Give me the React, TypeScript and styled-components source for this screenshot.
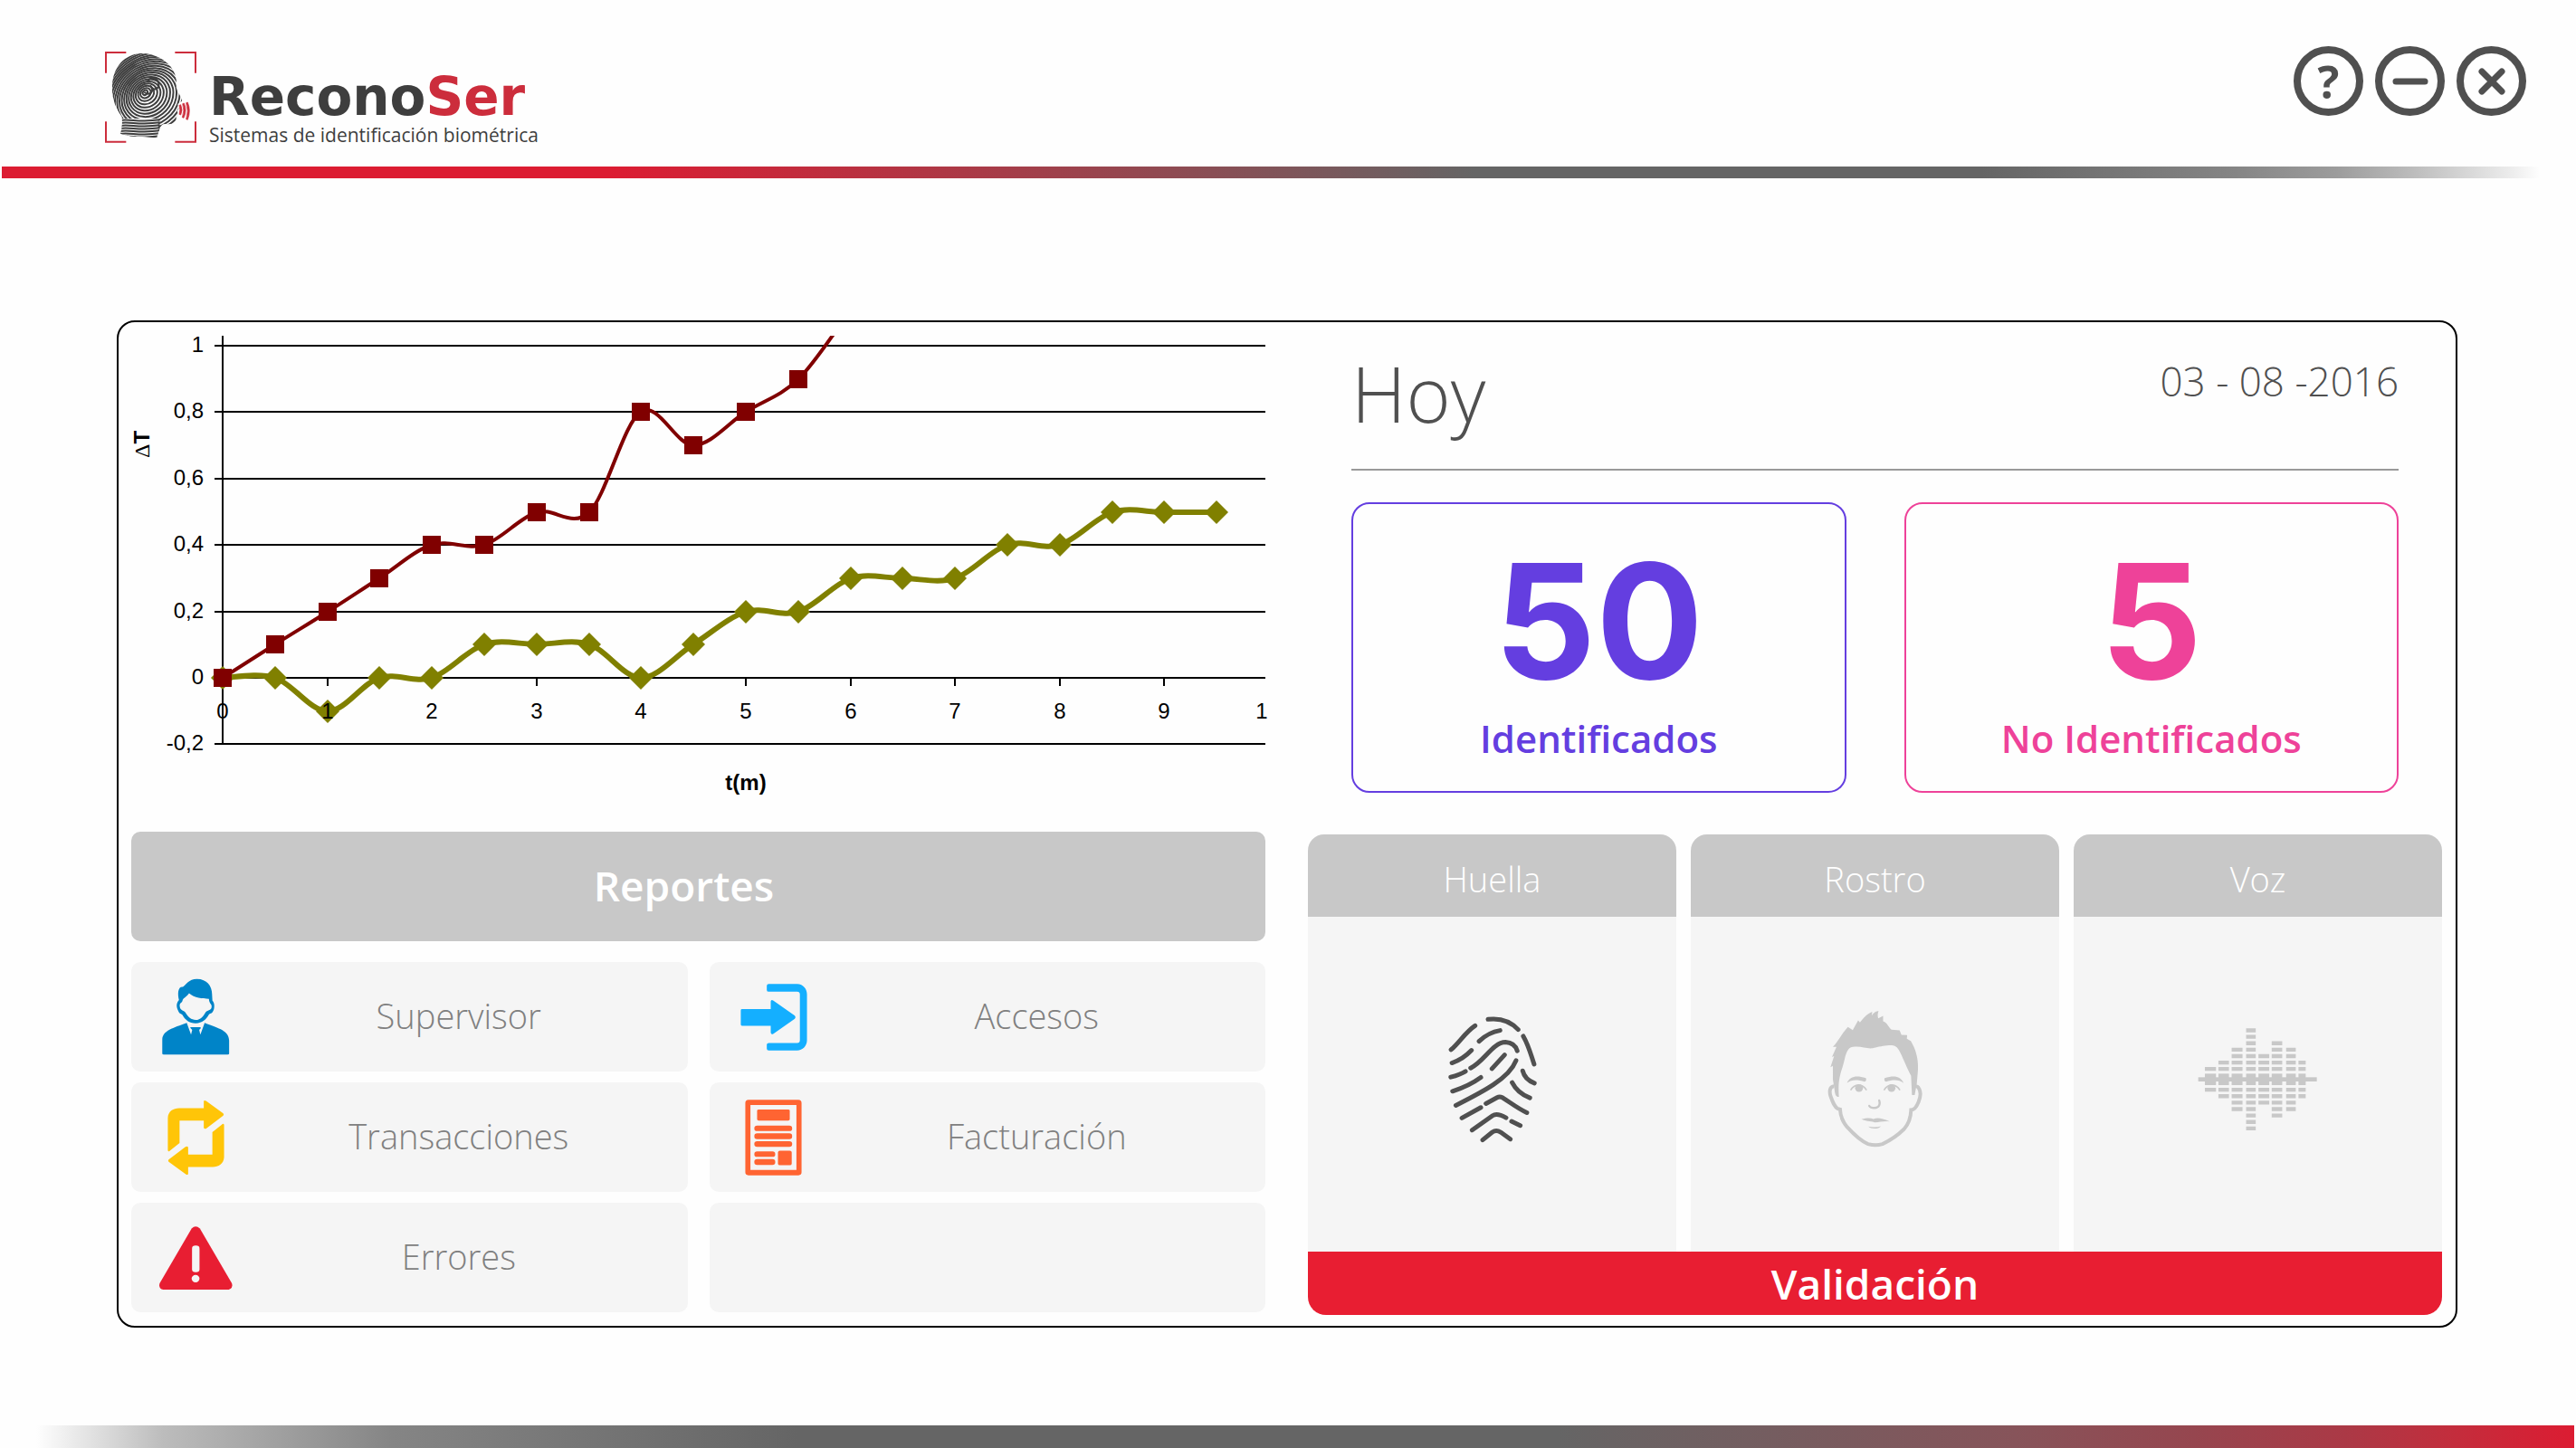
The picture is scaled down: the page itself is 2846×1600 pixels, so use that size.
import React, { useId } from "react";
import styled, { createGlobalStyle } from "styled-components";

const GlobalStyle = createGlobalStyle`
  * { box-sizing: border-box; }
  body { margin: 0; background: #fefefe; font-family: "Open Sans", "Noto Sans", sans-serif; }
  button { border: 0; padding: 0; margin: 0; background: none; color: inherit; font: inherit; cursor: pointer; }
  h1, h2, p { margin: 0; font: inherit; }
  svg { display: block; flex: none; }
`;

const INK = "#505050";
const RED = "#e81e32";
const LOGO_RED = "#cc2d3c";
const SILVER = "#c8c8c8";
const MIST = "#f5f5f5";

const Page = styled.div`
  display: flex;
  flex-direction: column;
  min-height: 100vh;
`;

const Header = styled.header`
  display: flex;
  justify-content: space-between;
  align-items: flex-start;
  height: 184px;
  padding: 51px 55px 0 116px;
`;

const TopRule = styled.div`
  height: 13px;
  margin: 0 40px 0 2px;
  background: linear-gradient(
    90deg,
    #dc1c32 0%,
    #dc1c32 24%,
    #96464f 44%,
    #656565 58%,
    #656565 78%,
    #858585 88%,
    #9c9c9c 92%,
    #bcbcbc 95%,
    #eeeeee 99%,
    #fefefe 100%
  );
`;

const BottomRule = styled.div`
  height: 25px;
  margin: 0 2px 0 40px;
  background: linear-gradient(
    270deg,
    #dc1c32 0%,
    #c22e3d 5%,
    #ab3946 9%,
    #96464f 15%,
    #87545a 22%,
    #656565 40%,
    #656565 70%,
    #858585 86%,
    #bcbcbc 95%,
    #fefefe 100%
  );
`;

const Logo = styled.div`
  display: flex;
  align-items: flex-start;
  gap: 14px;
  padding-top: 6px;
`;

const LogoText = styled.div`
  padding-top: 22px;
`;

const Brand = styled.h1`
  font: bold 58px/56px "DejaVu Sans", sans-serif;
  color: #3e3e3e;
`;

const BrandAccent = styled.span`
  color: ${LOGO_RED};
`;

const Tagline = styled.p`
  font-size: 21px;
  line-height: 28px;
  color: #3e3e3e;
`;

const Controls = styled.div`
  display: flex;
  gap: 13px;
`;

const RoundButton = styled.button`
  display: flex;
  align-items: center;
  justify-content: center;
  width: 77px;
  height: 77px;
  border: 8px solid ${INK};
  border-radius: 50%;
  color: ${INK};
  font-size: 50px;
  line-height: 50px;
  font-weight: 700;
`;

const Main = styled.main`
  flex: 1;
  padding: 157px 131px 40px 129px;
`;

const Panel = styled.div`
  display: grid;
  grid-template-columns: 1fr 1fr;
  column-gap: 47px;
  align-items: start;
  padding: 13px 15px 12px 14px;
  border: 2px solid #000;
  border-radius: 20px;
`;

const Chart = styled.svg`
  width: 100%;
  height: auto;
  overflow: visible;
`;

const Column = styled.section`
  min-width: 0;
`;

const ReportsTitle = styled.h2`
  display: flex;
  align-items: center;
  justify-content: center;
  height: 121px;
  padding: 0 32px 4px 0;
  border-radius: 10px;
  background: ${SILVER};
  color: #fff;
  font-size: 46px;
  font-weight: 600;
`;

const Tiles = styled.div`
  display: grid;
  grid-template-columns: 1fr 1fr;
  gap: 12px 24px;
  margin-top: 23px;
`;

const Tile = styled.button`
  display: flex;
  align-items: center;
  height: 121px;
  padding-left: 33px;
  border-radius: 10px;
  background: ${MIST};
  color: #808080;
`;

const EmptyTile = styled.div`
  border-radius: 10px;
  background: ${MIST};
`;

const TileIcon = styled.span`
  display: flex;
  justify-content: center;
  width: 76px;
`;

const TileLabel = styled.span`
  flex: 1;
  padding-bottom: 4px;
  text-align: center;
  font-size: 38px;
  line-height: 48px;
  font-weight: 300;
`;

const Today = styled.div`
  padding: 0 48px;
`;

const TodayHeader = styled.div`
  display: flex;
  justify-content: space-between;
  align-items: flex-start;
  height: 151px;
  padding-top: 22px;
  border-bottom: 2px solid #999;
  color: ${INK};
  font-weight: 300;
`;

const TodayTitle = styled.h2`
  font-size: 84px;
  line-height: 88px;
`;

const TodayDate = styled.time`
  padding-top: 6px;
  font-size: 44px;
  line-height: 48px;
`;

const Stats = styled.div`
  display: grid;
  grid-template-columns: 1fr 1fr;
  gap: 64px;
  margin-top: 35px;
`;

const StatCard = styled.div<{ $tone: string }>`
  display: flex;
  flex-direction: column;
  align-items: center;
  height: 321px;
  padding-top: 41px;
  border: 2px solid ${(p) => p.$tone};
  border-radius: 20px;
  color: ${(p) => p.$tone};
`;

const StatValue = styled.strong`
  font: 700 176px/176px Inter, sans-serif;
`;

const StatLabel = styled.span`
  margin-top: 18px;
  font-size: 42px;
  line-height: 48px;
  font-weight: 600;
`;

const Methods = styled.div`
  display: grid;
  grid-template-columns: repeat(3, 1fr);
  gap: 16px;
  margin-top: 46px;
`;

const Method = styled.button`
  display: flex;
  flex-direction: column;
  overflow: hidden;
  border-radius: 18px 18px 0 0;
  background: ${MIST};
`;

const MethodName = styled.span`
  width: 100%;
  height: 91px;
  padding-top: 25px;
  background: ${SILVER};
  color: #fff;
  text-align: center;
  font-size: 38px;
  line-height: 48px;
  font-weight: 300;
`;

const MethodArt = styled.span`
  display: flex;
  align-items: center;
  justify-content: center;
  width: 100%;
  height: 370px;
  padding-bottom: 12px;
`;

const Validate = styled.button`
  display: block;
  width: 100%;
  height: 70px;
  border-radius: 0 0 20px 20px;
  background: ${RED};
  color: #fff;
  font-size: 46px;
  line-height: 68px;
  font-weight: 600;
`;

/* ---------- logo ---------- */

const HEAD =
  "M117 6 C160 4 205 26 226 62 C238 85 238 105 236 118 C240 134 250 146 256 161 C252 170 243 170 241 175 L244 188 L239 197 L243 207 L236 217 C238 236 225 243 200 240 C182 239 180 262 172 284 C148 287 120 279 100 282 C82 280 66 276 51 272 C57 255 58 235 56 216 C36 190 22 155 24 115 C26 50 65 10 117 6Z";

function Emblem() {
  const id = useId();
  const rings = Array.from({ length: 21 }, (_, i) => i);
  const neck = Array.from({ length: 7 }, (_, i) => i);
  return (
    <svg width="101" height="101" viewBox="0 0 303 303" aria-hidden="true">
      <defs>
        <clipPath id={`${id}h`}><path d={HEAD} /></clipPath>
      </defs>
      <g fill="none" stroke={LOGO_RED} strokeWidth="6">
        <path d="M3 71V3H70M232 3H300V71M300 232V299H232M70 299H3V232" />
      </g>
      <path
        d="M246 178L251 176Q259 194 251 210L246 208Q251 194 246 178ZM257 173L262 171Q273 195 261 220L256 218Q265 195 257 173ZM269 170L274 168Q286 196 274 226L269 224Q278 196 269 170Z"
        fill={LOGO_RED}
        stroke={LOGO_RED}
        strokeWidth="2"
      />
      <g clipPath={`url(#${id}h)`} fill="none" stroke="#3e3e3e" strokeWidth="6">
        {rings.map((i) => (
          <ellipse
            key={i}
            cx={133 + i * 1.5}
            cy={136 + i * 1.5}
            rx={9 + i * 9.6}
            ry={7 + i * 8.4}
            transform={`rotate(-38 ${133 + i * 1.5} ${136 + i * 1.5})`}
          />
        ))}
        <path d="M130 134C150 150 165 130 150 112M140 100c10-18 34-14 38 6 4 16-18 26-26 10" />
        <path d="M48 222H176V290H48Z" fill="#fefefe" stroke="none" />
        {neck.map((i) => (
          <path key={i} d={`M48 ${228 + i * 9}C85 ${222 + i * 9} 110 ${236 + i * 9} 182 ${226 + i * 9}`} />
        ))}
      </g>
    </svg>
  );
}

/* ---------- chart ---------- */

const RED_SERIES = [0, 0.1, 0.2, 0.3, 0.4, 0.4, 0.5, 0.5, 0.8, 0.7, 0.8, 0.9, 1.11];
const OLIVE_SERIES = [0, 0, -0.1, 0, 0, 0.1, 0.1, 0.1, 0, 0.1, 0.2, 0.2, 0.3, 0.3, 0.3, 0.4, 0.4, 0.5, 0.5, 0.5];
const LEVELS = [1, 0.8, 0.6, 0.4, 0.2, 0, -0.2];
const TIMES = [0, 1, 2, 3, 4, 5, 6, 7, 8, 9];

const px = (t: number) => Math.round(246 + t * 115.6);
const py = (v: number) => Math.round(749 - v * 367);
const toPoints = (s: number[]) => s.map((v, i) => [px(i / 2), py(v)] as const);

function smooth(s: number[]) {
  const p = toPoints(s);
  return p.reduce((d, [x, y], i) => {
    if (i === 0) return `M${x} ${y}`;
    const a = p[i - 2] ?? p[i - 1];
    const b = p[i - 1];
    const n = p[i + 1] ?? p[i];
    return `${d}C${b[0] + (x - a[0]) / 6} ${b[1] + (y - a[1]) / 6} ${x - (n[0] - b[0]) / 6} ${y - (n[1] - b[1]) / 6} ${x} ${y}`;
  }, "");
}

function TemperatureChart() {
  const id = useId();
  return (
    <Chart viewBox="145 369 1253 550" role="img" aria-label="ΔT / t(m)">
      <defs>
        <clipPath id={`${id}p`}><rect x="230" y="371" width="1168" height="460" /></clipPath>
      </defs>
      <g stroke="#000" strokeWidth="2">
        {LEVELS.map((v) => <path key={v} d={`M237 ${py(v)}H1398`} />)}
        <path d={`M246 371V${py(-0.2)}`} />
        {TIMES.map((t) => <path key={t} d={`M${px(t)} 749v9`} />)}
      </g>
      <g clipPath={`url(#${id}p)`}>
        <path d={smooth(OLIVE_SERIES)} fill="none" stroke="#808000" strokeWidth="6" />
        {toPoints(OLIVE_SERIES).map(([x, y]) => <path key={x} d={`M${x} ${y - 13}l13 13l-13 13l-13 -13Z`} fill="#808000" />)}
        <path d={smooth(RED_SERIES)} fill="none" stroke="#800000" strokeWidth="4" />
        {toPoints(RED_SERIES).slice(0, 12).map(([x, y]) => <rect key={x} x={x - 10} y={y - 10} width="20" height="20" fill="#800000" />)}
      </g>
      <g fontFamily="'Liberation Sans', Arial, sans-serif" fontSize="24" fill="#000">
        {LEVELS.map((v) => <text key={v} x="225" y={py(v) + 7} textAnchor="end">{String(v).replace(".", ",")}</text>)}
        {TIMES.map((t) => <text key={t} x={px(t)} y="794" textAnchor="middle">{t}</text>)}
        <text x="1394" y="794" textAnchor="middle">1</text>
        <text x="824" y="873" textAnchor="middle" fontWeight="700">t(m)</text>
        <text transform="translate(165 506) rotate(-90)" fontFamily="'Liberation Serif', serif" fontSize="24">
          Δ<tspan fontFamily="'Liberation Sans', Arial, sans-serif" fontWeight="700">T</tspan>
        </text>
      </g>
    </Chart>
  );
}

/* ---------- report icons ---------- */

const SupervisorIcon = () => (
  <svg width="76" height="85" viewBox="134 488 177 231" preserveAspectRatio="none" fill="#0084c8" aria-hidden="true">
    <path
      fillRule="evenodd"
      d="M180 553C176 535 177 512 190 514C198 508 205 490 226 490C252 490 265 512 265 535L266 555C272 560 272 578 268 586C264 596 260 592 257 597C250 612 240 623 223 623C206 623 196 612 190 600C186 592 182 598 177 583C173 572 173 562 180 553ZM206 533C199 545 190 548 189 555C188 562 181 560 182 572C183 585 192 583 196 590C203 604 212 613 223 613C236 613 242 602 249 589C254 582 264 586 264 572C264 564 258 566 257 550C240 549 220 548 206 533Z"
    />
    <path d="M200 622L211 657L214 643L209 637Q208 635 211 635H234Q237 635 236 638L232 643L235 657L246 622C285 640 308 645 309 675V714Q309 717 305 717H141Q137 717 137 714V672C138 645 165 637 200 622Z" />
  </svg>
);

const ARROW = "M151 1002V905C152 885 165 876 180 876H243V856Q243 850 249 854L292 891Q296 895 292 899L250 936Q244 940 243 934V913H181V980L157 1003Q152 1008 151 1002Z";
const TransactionsIcon = () => (
  <svg width="63" height="84" viewBox="150 850 146 228" preserveAspectRatio="none" fill="#ffc508" aria-hidden="true">
    <path d={ARROW} />
    <path d={ARROW} transform="rotate(180 223 964)" />
  </svg>
);

const ErrorsIcon = () => (
  <svg width="81" height="70" viewBox="130 1229 186 190" preserveAspectRatio="none" aria-hidden="true">
    <path fill={RED} d="M212 1236Q222 1224 233 1236L314 1400Q318 1415 306 1419H140Q127 1415 131 1400Z" />
    <rect x="213" y="1287" width="19" height="80" rx="9" fill={MIST} />
    <ellipse cx="222" cy="1386" rx="10" ry="11" fill={MIST} />
  </svg>
);

const AccessIcon = () => (
  <svg width="74" height="74" viewBox="134 503 170 201" preserveAspectRatio="none" fill="#14afff" aria-hidden="true">
    <path d="M206 504H278C294 504 303 520 303 535V672C303 690 292 703 278 703H206Q201 703 201 698V686Q201 681 206 681H278Q285 681 285 672V535Q285 527 278 527H206Q201 527 201 522V509Q201 504 206 504Z" />
    <path d="M138 579H211V556Q212 549 218 554L272 599Q276 604 272 608L218 653Q212 657 211 650V629H138Q135 629 135 625V583Q135 579 138 579Z" />
  </svg>
);

const BillingIcon = () => (
  <svg width="63" height="84" viewBox="147 851 145 227" preserveAspectRatio="none" fill="#ff6432" aria-hidden="true">
    <path fillRule="evenodd" d="M156 852H283Q291 852 291 862V1068Q291 1077 283 1077H156Q148 1077 148 1068V862Q148 852 156 852ZM161 867V1061H278V867Z" />
    <rect x="178" y="881" width="83" height="33" rx="4" />
    <rect x="171" y="929" width="96" height="16" rx="7" />
    <rect x="171" y="952" width="96" height="17" rx="7" />
    <rect x="171" y="975" width="96" height="17" rx="7" />
    <rect x="171" y="1006" width="53" height="16" rx="7" />
    <rect x="171" y="1029" width="53" height="17" rx="7" />
    <rect x="231" y="1004" width="35" height="43" rx="5" />
  </svg>
);

/* ---------- biometric drawings ---------- */

const FingerprintArt = () => (
  <svg width="100" height="141" viewBox="115 95 300 424" fill="none" stroke={INK} strokeWidth="15" strokeLinecap="round" aria-hidden="true">
    <path d="M127 209C155 185 175 150 207 129M250 108C290 103 325 115 350 142M220 181C240 162 265 149 290 145M130 253C155 245 175 232 195 211M192 270C240 245 265 185 308 184C330 185 342 197 347 213M263 272L305 226M367 164C385 195 392 225 403 257M126 300C145 295 160 290 175 281M132 347C160 338 200 320 226 301M143 394C230 350 320 305 343 245M365 279C370 300 385 313 404 320M330 318C342 342 360 358 389 369M163 436L226 401M243 388L280 368Q288 364 298 368C325 385 350 405 379 418M197 476L265 428Q280 418 310 435M328 447L357 461M232 509L264 483Q277 474 292 483L324 506" />
  </svg>
);

function FaceSide() {
  return (
    <>
      <path d="M180 322C190 300 210 296 243 306Q246 316 238 318C215 310 195 310 180 322Z" />
      <path d="M192 346C205 324 232 324 245 346" fill="none" stroke={SILVER} strokeWidth="5" />
      <circle cx="220" cy="339" r="13" />
    </>
  );
}

const FaceArt = () => (
  <svg width="105" height="152" viewBox="115 80 316 456" fill={SILVER} aria-hidden="true">
    <path d="M133 202C150 185 165 155 183 136L199 146L217 114L223 121C235 105 245 93 264 85L262 98C270 86 278 83 285 82C282 92 281 98 284 107L300 99V117C315 122 318 138 328 145L355 147L361 162L380 163L379 175L392 182C412 215 419 250 415 290L412 325L405 362H396L393 298C380 275 365 235 352 212C340 190 320 198 300 199C280 202 268 207 258 207C240 207 225 199 200 202C175 205 175 240 165 270C155 300 150 320 153 368C142 368 140 360 138 340L133 310V265L125 270L137 233L130 236L145 202Z" />
    <path
      d="M137 333C122 334 121 350 125 365C132 385 138 402 150 408L157 410C158 430 165 450 180 468C200 490 225 515 250 525C265 529 285 529 298 525C325 512 350 495 370 475C385 458 392 435 393 412C405 412 412 400 418 385C424 370 427 355 420 342C416 334 412 332 408 334"
      fill="none"
      stroke={SILVER}
      strokeWidth="12"
    />
    <FaceSide />
    <g transform="translate(548 0) scale(-1 1)"><FaceSide /></g>
    <path d="M287 380C292 395 285 405 272 405C262 405 256 402 254 398" fill="none" stroke={SILVER} strokeWidth="7" strokeLinecap="round" />
    <path d="M228 443C245 438 258 438 268 442C280 436 295 438 322 450C300 448 290 452 272 453C255 448 245 450 228 443Z" />
    <path d="M251 467C265 470 280 470 293 466C285 476 260 476 251 467Z" />
  </svg>
);

const WAVE_COLUMNS = [
  { x: 109, w: 37, n: 1 },
  { x: 154, w: 35, n: 2 },
  { x: 198, w: 36, n: 4 },
  { x: 246, w: 32, n: 7 },
  { x: 287, w: 36, n: 3 },
  { x: 331, w: 35, n: 5 },
  { x: 379, w: 32, n: 4 },
  { x: 420, w: 24, n: 2 },
];

const VoiceArt = () => (
  <svg width="133" height="115" viewBox="85 135 400 345" fill={SILVER} aria-hidden="true">
    <rect x="87" y="301" width="394" height="14" />
    {WAVE_COLUMNS.map(({ x, w, n }) => (
      <g key={x}>
        <rect x={x} y="289" width={w} height="38" />
        {Array.from({ length: n }, (_, i) => (
          <path key={i} d={`M${x} ${267 - i * 21.4}h${w}v13h-${w}ZM${x} ${336 + i * 21.4}h${w}v13h-${w}Z`} />
        ))}
      </g>
    ))}
  </svg>
);

const REPORTS = [
  { label: "Supervisor", Icon: SupervisorIcon },
  { label: "Accesos", Icon: AccessIcon },
  { label: "Transacciones", Icon: TransactionsIcon },
  { label: "Facturación", Icon: BillingIcon },
  { label: "Errores", Icon: ErrorsIcon },
];

const METHODS = [
  { label: "Huella", Art: FingerprintArt },
  { label: "Rostro", Art: FaceArt },
  { label: "Voz", Art: VoiceArt },
];

export default function App() {
  return (
    <Page>
      <GlobalStyle />
      <Header>
        <Logo>
          <Emblem />
          <LogoText>
            <Brand>Recono<BrandAccent>Ser</BrandAccent></Brand>
            <Tagline>Sistemas de identificación biométrica</Tagline>
          </LogoText>
        </Logo>
        <Controls>
          <RoundButton type="button">?</RoundButton>
          <RoundButton type="button" aria-label="Minimizar">
            <svg width="40" height="40" viewBox="0 0 40 40" stroke={INK} strokeWidth="7" strokeLinecap="round"><path d="M4 20H36" /></svg>
          </RoundButton>
          <RoundButton type="button" aria-label="Cerrar">
            <svg width="40" height="40" viewBox="0 0 40 40" stroke={INK} strokeWidth="7" strokeLinecap="round"><path d="M9 9L31 31M31 9L9 31" /></svg>
          </RoundButton>
        </Controls>
      </Header>
      <TopRule />
      <Main>
        <Panel>
          <Column>
            <TemperatureChart />
            <ReportsTitle>Reportes</ReportsTitle>
            <Tiles>
              {REPORTS.map(({ label, Icon }) => (
                <Tile key={label} type="button">
                  <TileIcon><Icon /></TileIcon>
                  <TileLabel>{label}</TileLabel>
                </Tile>
              ))}
              <EmptyTile />
            </Tiles>
          </Column>
          <Column>
            <Today>
              <TodayHeader>
                <TodayTitle>Hoy</TodayTitle>
                <TodayDate dateTime="2016-08-03">03 - 08 -2016</TodayDate>
              </TodayHeader>
              <Stats>
                <StatCard $tone="#643ee0">
                  <StatValue>50</StatValue>
                  <StatLabel>Identificados</StatLabel>
                </StatCard>
                <StatCard $tone="#ee4299">
                  <StatValue>5</StatValue>
                  <StatLabel>No Identificados</StatLabel>
                </StatCard>
              </Stats>
            </Today>
            <Methods>
              {METHODS.map(({ label, Art }) => (
                <Method key={label} type="button">
                  <MethodName>{label}</MethodName>
                  <MethodArt><Art /></MethodArt>
                </Method>
              ))}
            </Methods>
            <Validate type="button">Validación</Validate>
          </Column>
        </Panel>
      </Main>
      <BottomRule />
    </Page>
  );
}
